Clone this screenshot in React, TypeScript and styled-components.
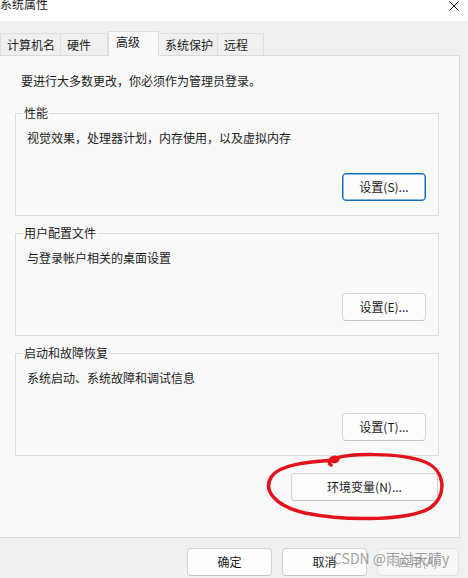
import React, { FC } from 'react';
import styled, { createGlobalStyle } from 'styled-components';

/* ---------- STYLES ---------- */

const GlobalStyle = createGlobalStyle`
    html, body {
        margin: 0;
        padding: 0;
        background: #f0f0f0;
        overflow: hidden;
    }
    body {
        font-family: "Noto Sans CJK SC", "Noto Sans", sans-serif;
        font-size: 12px;
        color: #1b1b1b;
    }
`;

const SWindow = styled.div`
    position: relative;
    width: 468px;
    height: 578px;
    overflow: hidden;
    background: #f0f0f0;
`;

const STitleBar = styled.div`
    height: 21px;
    background: #ffffff;
    display: flex;
    justify-content: space-between;
    align-items: flex-start;
    padding-right: 9px;
    box-sizing: border-box;
`;

const STitle = styled.span`
    line-height: 16px;
    margin-top: -4px;
`;

const STabStrip = styled.div`
    display: flex;
    align-items: flex-end;
    padding-top: 9px;
    height: 34px;
    box-sizing: border-box;
`;

const STab = styled.div<{ $width: number; $active?: boolean; $first?: boolean }>`
    box-sizing: border-box;
    width: ${(p) => p.$width}px;
    height: ${(p) => (p.$active ? 25 : 22)}px;
    padding: ${(p) => (p.$active ? '2px 0 0 7px' : '3px 0 0 6px')};
    line-height: 16px;
    white-space: nowrap;
    background: ${(p) => (p.$active ? '#f9f9f9' : '#f0f0f0')};
    border: 1px solid #dedede;
    border-bottom: none;
    border-left: ${(p) => (p.$active || p.$first ? '1px solid #dedede' : 'none')};
    position: relative;
    z-index: ${(p) => (p.$active ? 1 : 0)};
    margin-bottom: ${(p) => (p.$active ? -1 : 0)}px;
`;

const SPanel = styled.div`
    margin-left: -1px;
    width: 461px;
    box-sizing: border-box;
    background: #f9f9f9;
    border: 1px solid #dadada;
    padding: 17px 20px 36px 15px;
    display: flex;
    flex-direction: column;
`;

const SIntro = styled.div`
    line-height: 16px;
    padding-left: 6px;
    margin-bottom: 16px;
`;

const SGroups = styled.div`
    display: flex;
    flex-direction: column;
    gap: 9px;
`;

const SFieldset = styled.fieldset`
    margin: 0;
    padding: 0 12px 14px 11px;
    border: 1px solid #dcdcdc;
    min-inline-size: 0;
    display: flex;
    flex-direction: column;
`;

const SLegend = styled.legend`
    line-height: 16px;
    padding: 0 1px;
    margin-left: -4px;
`;

const SDesc = styled.div`
    line-height: 16px;
    margin-top: 9px;
`;

const SButtonRow = styled.div<{ $top: number; $right?: number }>`
    display: flex;
    justify-content: flex-end;
    margin-top: ${(p) => p.$top}px;
    padding-right: ${(p) => p.$right ?? 0}px;
`;

const SButton = styled.button<{ $width: number; $focused?: boolean }>`
    box-sizing: border-box;
    width: ${(p) => p.$width}px;
    height: 28px;
    padding: 0;
    font: inherit;
    line-height: 16px;
    color: #1b1b1b;
    background: #fdfdfd;
    border: 1px solid ${(p) => (p.$focused ? '#0f6cbd' : '#d3d3d3')};
    border-bottom-color: ${(p) => (p.$focused ? '#0f6cbd' : '#c2c2c2')};
    border-radius: 4px;
    box-shadow: ${(p) => (p.$focused ? 'inset 0 0 0 0.5px #0f6cbd' : 'none')};

    &:disabled {
        color: #a3a3a3;
        background: #f6f6f6;
        border-color: #e2e2e2;
    }
`;

const SFooter = styled.div`
    display: flex;
    justify-content: flex-end;
    gap: 10px;
    margin-top: 10px;
    padding-right: 9px;
`;

const SWatermark = styled.div`
    position: absolute;
    left: 333px;
    top: 548px;
    font-size: 14px;
    line-height: 20px;
    color: rgba(128, 128, 128, 0.75);
    white-space: nowrap;
    pointer-events: none;
`;

const SAnnotation = styled.svg`
    position: absolute;
    left: 0;
    top: 0;
    pointer-events: none;
`;

/* ---------- COMPONENTS ---------- */

const CloseIcon: FC = () => (
    <svg width="10" height="10" viewBox="0 0 10 10" style={{ marginTop: 1 }}>
        <path d="M0.5 0.5 L9.5 9.5 M9.5 0.5 L0.5 9.5" stroke="#1b1b1b" strokeWidth="1" fill="none" />
    </svg>
);

interface GroupProps {
    title: string;
    desc: string;
    button: string;
    focused?: boolean;
}

const Group: FC<GroupProps> = ({ title, desc, button, focused }) => (
    <SFieldset>
        <SLegend>{title}</SLegend>
        <SDesc>{desc}</SDesc>
        <SButtonRow $top={27}>
            <SButton $width={84} $focused={focused}>
                {button}
            </SButton>
        </SButtonRow>
    </SFieldset>
);

const tabs = [
    { label: '计算机名', width: 61 },
    { label: '硬件', width: 47 },
    { label: '高级', width: 51, active: true },
    { label: '系统保护', width: 59 },
    { label: '远程', width: 46 },
];

const App: FC = () => (
    <>
        <GlobalStyle />
        <SWindow>
            <STitleBar>
                <STitle>系统属性</STitle>
                <CloseIcon />
            </STitleBar>
            <STabStrip>
                {tabs.map((tab, i) => (
                    <STab key={tab.label} $width={tab.width} $active={tab.active} $first={i === 0}>
                        {tab.label}
                    </STab>
                ))}
            </STabStrip>
            <SPanel>
                <SIntro>要进行大多数更改，你必须作为管理员登录。</SIntro>
                <SGroups>
                    <Group title="性能" desc="视觉效果，处理器计划，内存使用，以及虚拟内存" button="设置(S)..." focused />
                    <Group title="用户配置文件" desc="与登录帐户相关的桌面设置" button="设置(E)..." />
                    <Group title="启动和故障恢复" desc="系统启动、系统故障和调试信息" button="设置(T)..." />
                </SGroups>
                <SButtonRow $top={17} $right={1}>
                    <SButton $width={147}>环境变量(N)...</SButton>
                </SButtonRow>
            </SPanel>
            <SFooter>
                <SButton $width={85}>确定</SButton>
                <SButton $width={85}>取消</SButton>
                <SButton $width={82} disabled>
                    应用(A)
                </SButton>
            </SFooter>
            <SWatermark>CSDN @雨过天晴y</SWatermark>
            <SAnnotation width="468" height="578" viewBox="0 0 468 578">
                <path
                    d="M331 465 C326 462 333 455 337 458 C340 461 333 463 331 460 C345 453 400 452 425 462 C445 470 448 495 430 508 C410 520 350 522 305 513 C275 506 262 490 272 476 C280 465 305 462 335 460"
                    stroke="#e3121b"
                    strokeWidth="3.5"
                    strokeLinecap="round"
                    strokeLinejoin="round"
                    fill="none"
                />
            </SAnnotation>
        </SWindow>
    </>
);

export default App;
